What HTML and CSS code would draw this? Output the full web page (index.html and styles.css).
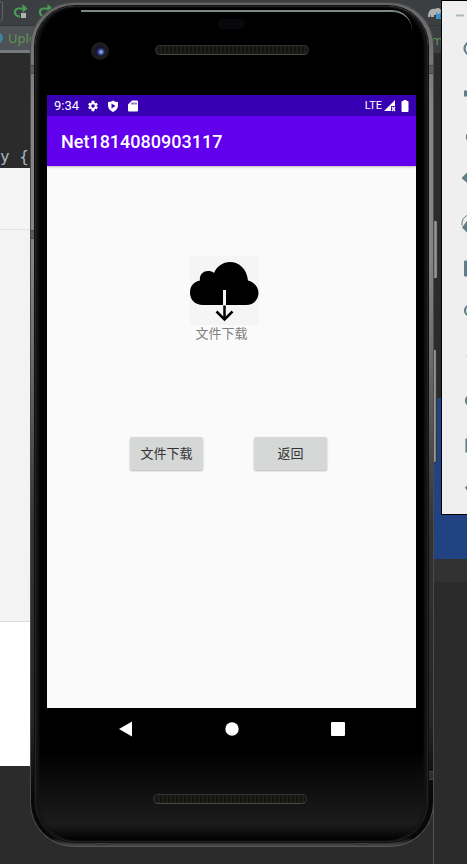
FILE: index.html
```html
<!DOCTYPE html>
<html lang="zh-CN">
<head>
<meta charset="utf-8">
<meta name="viewport" content="width=device-width, initial-scale=1">
<title>Net1814080903117</title>
<link rel="stylesheet" href="styles.css">
</head>
<body>
<div class="desktop">
  <div class="ide">
    <div class="ide-toolbar">
      <svg class="ide-reruns" viewBox="0 0 60 26" aria-hidden="true">
        <path d="M-4 1.500H0Q2.500 1.500 2.500 4V18Q2.500 21.500-1 21.500" fill="none" stroke="#626567"/>
        <g fill="none" stroke="#499c54" stroke-width="2.200">
          <path d="M20 16.500C14 16.500 13 9 18.500 8.500H24"/>
          <path d="M45 16.500C39 16.500 38 9 43.500 8.500H49"/>
        </g>
        <path d="M22.500 4L27.500 8.500L22.500 13ZM47.500 4L52.500 8.500L47.500 13Z" fill="#499c54"/>
        <path d="M21 13h5v5h-5z" fill="#afb1b3"/>
      </svg>
      <svg class="ide-gradle" viewBox="0 0 40 26" aria-hidden="true">
        <path d="M1 17C1 11 4 8 8 9C11 7 14 8 14 11C17 11 17 8 15 8C14 5 19 5 19 9C19 14 15 14 14 13L12 17H9V15H7V17H4V14L3 17Z" fill="#afb1b3"/>
        <path d="M9 12V19H16Z" fill="#3592c4"/><path d="M15 12L10 18" stroke="#3592c4" stroke-width="2"/>
      </svg>
    </div>
    <div class="ide-tabs">
      <span class="ide-tab"><i class="class-icon"></i>Uplo</span>
      <span class="ide-tab-end">m</span>
    </div>
    <div class="ide-body">
      <div class="editor">
        <code class="code">y {</code>
        <div class="preview"></div>
        <div class="preview-blank"></div>
      </div>
      <div class="log">
        <div class="log-selected"></div>
        <div class="log-next"></div>
        <div class="log-rest"></div>
      </div>
    </div>
  </div>

  <div class="emulator-tools">
    <svg viewBox="0 0 25 512" aria-hidden="true">
      <path d="M14 14h8" stroke="#a9b8c0" stroke-width="2"/>
      <g fill="none" stroke="#5f7e8c" stroke-width="2.200">
        <circle cx="29" cy="47" r="6.500"/>
        <path d="M28 172L21.500 177L28 182"/>
        <path d="M20 224Q19 216 27 213" stroke-width="1"/>
        <circle cx="28" cy="309" r="5"/>
        <circle cx="29" cy="399" r="5"/>
        <path d="M28 438H24.500V450H28"/>
      </g>
      <g fill="#5f7e8c">
        <path d="M22 89h5v6h-5zM24 133h4v5h-4zM20 176L27 169V183ZM20 226L26 218V232ZM22 260q0-1 1-1h5v16h-5q-1 0-1-1zM23 486L25 484V489Z"/>
      </g>
      <path d="M24 355h3" stroke="#b5bec3"/>
    </svg>
  </div>

  <div class="phone">
    <i class="side-key power"></i>
    <i class="side-key volume"></i>
    <div class="frame">
      <i class="antenna tl"></i><i class="antenna tr"></i><i class="antenna ml"></i><i class="antenna br"></i>
      <i class="antenna bottom-l"></i><i class="antenna bottom-r"></i>
      <div class="glass">
        <div class="forehead">
          <i class="shine"></i>
          <i class="sensor"></i>
          <i class="camera"></i>
          <i class="speaker"></i>
        </div>
        <main class="screen">
          <div class="status">
            <span class="clock">9:34</span>
            <svg class="status-icon" viewBox="0 0 24 24" role="img" aria-label="Settings"><path fill-rule="evenodd" d="M19.400 13c.1-.6.1-1.300 0-2l2.300-1.700-2.200-3.800-2.700 1.100-1.600-1L14.800 1.500H9.200l-.4 4.100-1.600 1-2.700-1.100L2.300 9.300 4.600 11v2l-2.300 1.700 2.200 3.800 2.700-1.100 1.600 1 .4 4.100h5.600l.4-4.100 1.600-1 2.700 1.100 2.200-3.800ZM12 8.500a3.500 3.500 0 1 1 0 7 3.500 3.500 0 0 1 0-7Z"/></svg>
            <svg class="status-icon" viewBox="0 0 24 24" role="img" aria-label="Play Protect"><path fill-rule="evenodd" d="M12 1Q16 4 22 4V11Q22 19 12 24Q2 19 2 11V4Q8 4 12 1ZM9 7V17L17 12Z"/></svg>
            <svg class="status-icon" viewBox="0 0 24 24" role="img" aria-label="SD card"><path fill-rule="evenodd" d="M10 1H20Q22 1 22 3V21Q22 23 20 23H4Q2 23 2 21V9ZM9 5V9H11V5ZM13 5V9H15V5ZM17 5V9H19V5Z"/></svg>
            <span class="network">LTE</span>
            <svg class="status-signal" viewBox="0 0 12 12" role="img" aria-label="Signal"><path d="M0 11L11 0V6H7V11Z"/><path d="M8 7L11 11M11 7L8 11" stroke="#fff" stroke-width="1.300"/></svg>
            <svg class="status-battery" viewBox="0 0 8 12" role="img" aria-label="Battery"><path d="M2.500 0H5.500V1H6.500Q7.500 1 7.500 2V11Q7.500 12 6.500 12H1.500Q.5 12 .5 11V2Q.5 1 1.500 1H2.500Z"/></svg>
          </div>
          <header class="appbar"><h1>Net1814080903117</h1></header>
          <section class="content">
            <figure class="download">
              <svg viewBox="0 0 69 69" aria-hidden="true">
                <path fill="#f5f5f5" d="M0 0h69v69H0z"/>
                <path d="M13 49C5 49 0 44 0 36.500C0 30 4 25.500 10 24.500C9 19 13 15 18 15C20.500 15 22.500 15.500 24 17C27 10 33 6 40 6C49 6 57 13 58 24.500C64 26 68.500 31 68.500 37C68.500 44 63 49 56 49Z"/>
                <path d="M33 34h3v15h-3z" fill="#f5f5f5"/>
                <path d="M34.500 49.500V63" stroke="#000" stroke-width="2.500"/>
                <path d="M26.500 55.500L34.500 63.500L42.500 55.500" fill="none" stroke="#000" stroke-width="2.500"/>
              </svg>
              <figcaption>文件下载</figcaption>
            </figure>
            <div class="actions">
              <button type="button">文件下载</button>
              <button type="button">返回</button>
            </div>
          </section>
        </main>
        <nav class="navbar">
          <button type="button" aria-label="Back"><svg viewBox="0 0 16 16"><path d="M1 8L14 .5V15.500Z"/></svg></button>
          <button type="button" aria-label="Home"><svg viewBox="0 0 16 16"><circle cx="8" cy="8" r="6.700"/></svg></button>
          <button type="button" aria-label="Overview"><svg viewBox="0 0 16 16"><rect x="1" y="1" width="14" height="14" rx="1"/></svg></button>
        </nav>
        <div class="chin"><i class="speaker"></i></div>
      </div>
    </div>
  </div>
</div>
</body>
</html>
```
FILE: styles.css
```css
* {
  box-sizing: border-box;
}

body {
  margin: 0;
  background: #2b2b2b;
  font-family: Roboto, "Noto Sans CJK SC", sans-serif;
}

.desktop {
  position: relative;
  min-height: 100vh;
  overflow: hidden;
}

/* IDE window behind the emulator */
.ide {
  position: absolute;
  inset: 0;
  display: flex;
  flex-direction: column;
}

.ide-toolbar {
  display: flex;
  justify-content: space-between;
  height: 26px;
  background: #3c3f41;
  border-bottom: 1px solid #323435;
}

.ide-reruns {
  width: 60px;
  height: 26px;
}

.ide-gradle {
  width: 40px;
  height: 26px;
}

.ide-tabs {
  display: flex;
  align-items: center;
  justify-content: space-between;
  height: 27px;
  background: linear-gradient(90deg, #4e5254 50%, #3c3f41 50%);
  color: #629755;
  font: 13px "Open Sans", sans-serif;
}

.ide-tab {
  display: flex;
  align-items: center;
  gap: 5px;
  flex: 1;
  height: 100%;
  border-bottom: 3px solid #747a80;
}

.ide-tab-end {
  padding-right: 24px;
}

.class-icon {
  width: 12px;
  height: 12px;
  margin-left: -9px;
  border-radius: 50%;
  background: #3e86a0;
}

.ide-body {
  display: grid;
  grid-template-columns: 1fr 1fr;
  flex: 1;
}

.editor,
.log {
  display: flex;
  flex-direction: column;
}

.code {
  display: flex;
  align-items: flex-end;
  height: 115px;
  padding-bottom: 2px;
  color: #a9b7c6;
  font: 16px "DejaVu Sans Mono", monospace;
}

.preview {
  height: 454px;
  border-bottom: 1px solid #dcdcdc;
  background: linear-gradient(#f5f5f5 61px, #e2e2e2 61px, #e2e2e2 62px, #f3f3f3 62px);
}

.preview-blank {
  height: 144px;
  background: #fff;
}

.log-selected {
  height: 161px;
  margin-top: 345px;
  background: #214283;
}

.log-next {
  height: 23px;
  background: #323232;
}

.log-rest {
  flex: 1;
  margin-right: 33px;
  border-right: 1px solid #555;
}

/* Emulator tool strip, running off the right edge */
.emulator-tools {
  position: absolute;
  top: 0;
  right: 0;
  width: 26px;
  border: 1px solid #000;
  border-right: 0;
  background: #efefef;
}

.emulator-tools svg {
  display: block;
  width: 25px;
  height: 513px;
}

/* Phone */
.phone {
  position: absolute;
  top: 2px;
  left: 30px;
  right: 33px;
}

.frame {
  position: relative;
  padding: 3px 5px 4px 4px;
  border: 1px solid #4b4b4b;
  border-bottom-color: #555;
  border-radius: 44px;
  background: linear-gradient(#666 0, #858585 12%, #858585 30%, #6c6c6c 42%, #333 62%, #262626 85%, #080808 94%, #080808 99%, #4a4a4a);
}

.glass {
  position: relative;
  padding: 1px 11px 0;
  border: 1px solid #222;
  border-radius: 40px;
  background: linear-gradient(#000 89%, #1c1c1c 98%, #000);
  box-shadow: inset 3px 0 2px #141414, inset -3px 0 2px #141414, 0 0 0 1px #101010;
}

.side-key {
  position: absolute;
  right: -4px;
  width: 6px;
  border: 1px solid #333;
  border-radius: 2px;
  background: linear-gradient(90deg, #555, #999 60%, #777);
}

.power {
  top: 218px;
  height: 59px;
}

.volume {
  top: 347px;
  right: -3px;
  height: 114px;
}

.antenna {
  position: absolute;
  width: 4px;
  height: 9px;
  border: solid #444;
  border-width: 1px 0;
  background: #5c5c5c;
}

.tl {
  top: 62px;
  left: 0;
}

.tr {
  top: 62px;
  right: 0;
}

.ml {
  top: 227px;
  left: 0;
}

.br {
  top: 768px;
  right: 0;
  background: #2d2d2d;
}

.bottom-l,
.bottom-r {
  bottom: 0;
  width: 12px;
  height: 3px;
  background: #333;
}

.bottom-l {
  left: 64px;
}

.bottom-r {
  right: 64px;
}

.forehead {
  position: relative;
  height: 87px;
}

.shine {
  position: absolute;
  top: 2px;
  left: 34px;
  right: 4px;
  height: 20px;
  border-top: 2px solid #7d8987;
  border-radius: 0 28px 0 0;
}

.sensor {
  position: absolute;
  top: 11px;
  left: 50%;
  width: 27px;
  height: 10px;
  margin-left: -14px;
  border-radius: 5px;
  background: #08090d;
}

.camera {
  position: absolute;
  top: 34px;
  left: 44px;
  width: 18px;
  height: 18px;
  border: 4px solid #1d1d1f;
  border-radius: 50%;
  background: radial-gradient(circle at 60% 60%, #8c9ee0 0 1px, #26357c 3px, #10142c 5px);
}

.speaker {
  display: block;
  width: 154px;
  height: 10px;
  margin: 0 auto;
  border: 1px solid #31312f;
  border-bottom-color: #4a4a4a;
  border-radius: 5px;
  background: repeating-linear-gradient(90deg, #201e19 0 2px, #151411 2px 4px);
}

.forehead .speaker {
  position: relative;
  top: 37px;
}

.screen {
  display: flex;
  flex-direction: column;
  background: #fafafa;
}

.status {
  display: flex;
  align-items: center;
  height: 21px;
  padding: 0 7px;
  background: #3700b3;
  color: #fff;
  font-size: 11px;
}

.clock {
  font-size: 13px;
}

.status svg {
  fill: #fff;
}

.status-icon {
  width: 12px;
  height: 12px;
  margin-left: 8px;
}

.network {
  margin-left: auto;
}

.status-signal {
  width: 12px;
  height: 12px;
  margin-left: 2px;
}

.status-battery {
  width: 8px;
  height: 12px;
  margin-left: 5px;
}

.appbar {
  display: flex;
  align-items: center;
  height: 50px;
  padding: 0 14px;
  background: #6200ee;
  box-shadow: 0 1px 2px #0004;
  color: #fff;
}

.appbar h1 {
  margin: 0;
  font-size: 18px;
  font-weight: 500;
}

.content {
  display: flex;
  flex-direction: column;
  align-items: center;
  min-height: 542px;
  padding: 90px 6px 0 0;
}

.download {
  display: flex;
  flex-direction: column;
  margin: 0 8px 0 0;
}

.download svg {
  width: 69px;
  height: 69px;
}

.download figcaption {
  padding-right: 6px;
  color: #808080;
  font-size: 13px;
  line-height: 17px;
  text-align: center;
}

.actions {
  display: flex;
  gap: 51px;
  margin-top: 95px;
}

.actions button {
  width: 73px;
  height: 33px;
  padding: 0 0 2px;
  border: 0;
  border-radius: 2px;
  background: #d6d7d7;
  box-shadow: 0 1px 2px #0004;
  color: #333;
  font: 13px Roboto, "Noto Sans CJK SC", sans-serif;
}

.navbar {
  display: flex;
  justify-content: center;
  gap: 90px;
  height: 42px;
}

.navbar button {
  display: flex;
  align-items: center;
  padding: 0;
  border: 0;
  background: none;
}

.navbar svg {
  width: 16px;
  height: 16px;
  fill: #fff;
}

.chin {
  height: 91px;
  padding: 44px 4px 0 0;
}
```
